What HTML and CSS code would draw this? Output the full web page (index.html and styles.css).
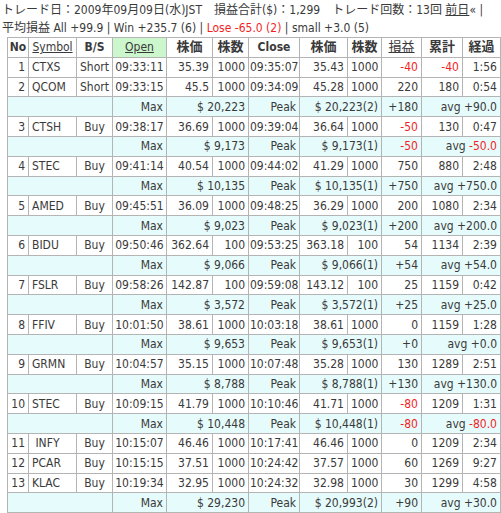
FILE: index.html
```html
<!DOCTYPE html>
<html lang="ja">
<head>
<meta charset="utf-8">
<title>トレード</title>
<link rel="stylesheet" href="styles.css">
</head>
<body>
<div class="info">
  <div class="line">トレード日：2009年09月09日(水)JST　損益合計($)：1,299　トレード回数：13回 <a href="#">前日</a>« |</div>
  <div class="line">平均損益 All +99.9 | Win +235.7 (6) | <span class="red">Lose -65.0 (2)</span> | small +3.0 (5)</div>
</div>
<table class="trades">
  <colgroup>
    <col class="c-no"><col class="c-sym"><col class="c-bs"><col class="c-open"><col class="c-p1"><col class="c-q1"><col class="c-close"><col class="c-p2"><col class="c-q2"><col class="c-pl"><col class="c-cum"><col class="c-el">
  </colgroup>
  <thead>
    <tr>
      <th>No</th><th><a href="#">Symbol</a></th><th>B/S</th><th class="open"><a href="#">Open</a></th><th class="jp">株価</th><th class="jp">株数</th><th>Close</th><th class="jp">株価</th><th class="jp">株数</th><th class="jp"><a href="#">損益</a></th><th class="jp">累計</th><th class="jp">経過</th>
    </tr>
  </thead>
  <tbody>
    <tr><td class="r">1</td><td>CTXS</td><td class="c">Short</td><td class="c">09:33:11</td><td class="r">35.39</td><td class="r">1000</td><td class="c">09:35:07</td><td class="r">35.43</td><td class="r">1000</td><td class="r red">-40</td><td class="r red">-40</td><td class="r">1:56</td></tr>
    <tr><td class="r">2</td><td>QCOM</td><td class="c">Short</td><td class="c">09:33:15</td><td class="r">45.5</td><td class="r">1000</td><td class="c">09:34:09</td><td class="r">45.28</td><td class="r">1000</td><td class="r">220</td><td class="r">180</td><td class="r">0:54</td></tr>
    <tr class="sum"><td colspan="3"></td><td class="r">Max</td><td class="r" colspan="2">$ 20,223</td><td class="r">Peak</td><td class="r" colspan="2">$ 20,223(2)</td><td class="r">+180</td><td class="r" colspan="2">avg +90.0</td></tr>
    <tr><td class="r">3</td><td>CTSH</td><td class="c">Buy</td><td class="c">09:38:17</td><td class="r">36.69</td><td class="r">1000</td><td class="c">09:39:04</td><td class="r">36.64</td><td class="r">1000</td><td class="r red">-50</td><td class="r">130</td><td class="r">0:47</td></tr>
    <tr class="sum"><td colspan="3"></td><td class="r">Max</td><td class="r" colspan="2">$ 9,173</td><td class="r">Peak</td><td class="r" colspan="2">$ 9,173(1)</td><td class="r red">-50</td><td class="r" colspan="2">avg <span class="red">-50.0</span></td></tr>
    <tr><td class="r">4</td><td>STEC</td><td class="c">Buy</td><td class="c">09:41:14</td><td class="r">40.54</td><td class="r">1000</td><td class="c">09:44:02</td><td class="r">41.29</td><td class="r">1000</td><td class="r">750</td><td class="r">880</td><td class="r">2:48</td></tr>
    <tr class="sum"><td colspan="3"></td><td class="r">Max</td><td class="r" colspan="2">$ 10,135</td><td class="r">Peak</td><td class="r" colspan="2">$ 10,135(1)</td><td class="r">+750</td><td class="r" colspan="2">avg +750.0</td></tr>
    <tr><td class="r">5</td><td>AMED</td><td class="c">Buy</td><td class="c">09:45:51</td><td class="r">36.09</td><td class="r">1000</td><td class="c">09:48:25</td><td class="r">36.29</td><td class="r">1000</td><td class="r">200</td><td class="r">1080</td><td class="r">2:34</td></tr>
    <tr class="sum"><td colspan="3"></td><td class="r">Max</td><td class="r" colspan="2">$ 9,023</td><td class="r">Peak</td><td class="r" colspan="2">$ 9,023(1)</td><td class="r">+200</td><td class="r" colspan="2">avg +200.0</td></tr>
    <tr><td class="r">6</td><td>BIDU</td><td class="c">Buy</td><td class="c">09:50:46</td><td class="r">362.64</td><td class="r">100</td><td class="c">09:53:25</td><td class="r">363.18</td><td class="r">100</td><td class="r">54</td><td class="r">1134</td><td class="r">2:39</td></tr>
    <tr class="sum"><td colspan="3"></td><td class="r">Max</td><td class="r" colspan="2">$ 9,066</td><td class="r">Peak</td><td class="r" colspan="2">$ 9,066(1)</td><td class="r">+54</td><td class="r" colspan="2">avg +54.0</td></tr>
    <tr><td class="r">7</td><td>FSLR</td><td class="c">Buy</td><td class="c">09:58:26</td><td class="r">142.87</td><td class="r">100</td><td class="c">09:59:08</td><td class="r">143.12</td><td class="r">100</td><td class="r">25</td><td class="r">1159</td><td class="r">0:42</td></tr>
    <tr class="sum"><td colspan="3"></td><td class="r">Max</td><td class="r" colspan="2">$ 3,572</td><td class="r">Peak</td><td class="r" colspan="2">$ 3,572(1)</td><td class="r">+25</td><td class="r" colspan="2">avg +25.0</td></tr>
    <tr><td class="r">8</td><td>FFIV</td><td class="c">Buy</td><td class="c">10:01:50</td><td class="r">38.61</td><td class="r">1000</td><td class="c">10:03:18</td><td class="r">38.61</td><td class="r">1000</td><td class="r">0</td><td class="r">1159</td><td class="r">1:28</td></tr>
    <tr class="sum"><td colspan="3"></td><td class="r">Max</td><td class="r" colspan="2">$ 9,653</td><td class="r">Peak</td><td class="r" colspan="2">$ 9,653(1)</td><td class="r">+0</td><td class="r" colspan="2">avg +0.0</td></tr>
    <tr><td class="r">9</td><td>GRMN</td><td class="c">Buy</td><td class="c">10:04:57</td><td class="r">35.15</td><td class="r">1000</td><td class="c">10:07:48</td><td class="r">35.28</td><td class="r">1000</td><td class="r">130</td><td class="r">1289</td><td class="r">2:51</td></tr>
    <tr class="sum"><td colspan="3"></td><td class="r">Max</td><td class="r" colspan="2">$ 8,788</td><td class="r">Peak</td><td class="r" colspan="2">$ 8,788(1)</td><td class="r">+130</td><td class="r" colspan="2">avg +130.0</td></tr>
    <tr><td class="r">10</td><td>STEC</td><td class="c">Buy</td><td class="c">10:09:15</td><td class="r">41.79</td><td class="r">1000</td><td class="c">10:10:46</td><td class="r">41.71</td><td class="r">1000</td><td class="r red">-80</td><td class="r">1209</td><td class="r">1:31</td></tr>
    <tr class="sum"><td colspan="3"></td><td class="r">Max</td><td class="r" colspan="2">$ 10,448</td><td class="r">Peak</td><td class="r" colspan="2">$ 10,448(1)</td><td class="r red">-80</td><td class="r" colspan="2">avg <span class="red">-80.0</span></td></tr>
    <tr><td class="r">11</td><td>&nbsp;INFY</td><td class="c">Buy</td><td class="c">10:15:07</td><td class="r">46.46</td><td class="r">1000</td><td class="c">10:17:41</td><td class="r">46.46</td><td class="r">1000</td><td class="r">0</td><td class="r">1209</td><td class="r">2:34</td></tr>
    <tr><td class="r">12</td><td>PCAR</td><td class="c">Buy</td><td class="c">10:15:15</td><td class="r">37.51</td><td class="r">1000</td><td class="c">10:24:42</td><td class="r">37.57</td><td class="r">1000</td><td class="r">60</td><td class="r">1269</td><td class="r">9:27</td></tr>
    <tr><td class="r">13</td><td>KLAC</td><td class="c">Buy</td><td class="c">10:19:34</td><td class="r">32.95</td><td class="r">1000</td><td class="c">10:24:32</td><td class="r">32.98</td><td class="r">1000</td><td class="r">30</td><td class="r">1299</td><td class="r">4:58</td></tr>
    <tr class="sum"><td colspan="3"></td><td class="r">Max</td><td class="r" colspan="2">$ 29,230</td><td class="r">Peak</td><td class="r" colspan="2">$ 20,993(2)</td><td class="r">+90</td><td class="r" colspan="2">avg +30.0</td></tr>
  </tbody>
</table>
</body>
</html>
```
FILE: styles.css
```css
html, body {
  margin: 0;
  padding: 0;
  background: #ffffff;
}
body {
  font-family: "DejaVu Sans Condensed", "DejaVu Sans", "Noto Sans CJK JP", sans-serif;
  font-size: 12px;
  color: #3a3a3a;
  padding: 1px 0 0 2px;
}
a {
  color: #3a3a3a;
  text-decoration: underline;
  font-weight: normal;
}
.red {
  color: #f41f1f;
}
.info .line {
  line-height: 18px;
  white-space: nowrap;
}
.trades {
  margin: 0 0 0 5px;
  border-collapse: collapse;
  table-layout: fixed;
  width: 493px;
}
.trades th,
.trades td {
  border: 1px solid #b4b4b4;
  height: 19.8px;
  line-height: 16px;
  padding: 1px 3px;
  white-space: nowrap;
  overflow: hidden;
  box-sizing: border-box;
}
.trades th {
  font-weight: bold;
  text-align: center;
  padding: 1px 1px;
}
.trades th.jp {
  font-size: 13px;
}
.trades th.open {
  background: #ccf6cc;
}
.trades td.r { text-align: right; }
.trades td.c { text-align: center; }
.trades td.c { padding-left: 1px; padding-right: 1px; }
.trades tr.sum td {
  background: #e6fbfb;
}
.c-no { width: 21px; }
.c-sym { width: 48px; }
.c-bs { width: 36px; }
.c-open { width: 54px; }
.c-p1 { width: 46px; }
.c-q1 { width: 36px; }
.c-close { width: 51px; }
.c-p2 { width: 48px; }
.c-q2 { width: 34px; }
.c-pl { width: 40px; }
.c-cum { width: 41px; }
.c-el { width: 38px; }
```
